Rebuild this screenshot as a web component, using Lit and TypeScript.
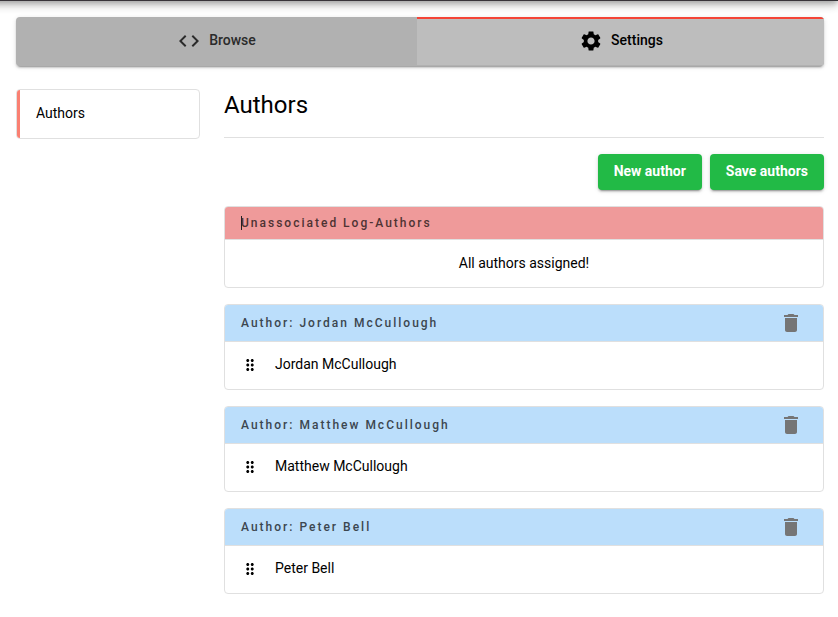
import { LitElement, html, css, svg } from "lit";
import { customElement, property } from "lit/decorators.js";

const icons: Record<string, ReturnType<typeof svg>> = {
  code: svg`<path d="M9.4 16.6L4.8 12l4.6-4.6L8 6l-6 6 6 6 1.4-1.4zm5.2 0l4.6-4.6-4.6-4.6L16 6l6 6-6 6-1.4-1.4z"/>`,
  settings: svg`<path d="M19.14 12.94c.04-.3.06-.61.06-.94 0-.32-.02-.64-.07-.94l2.03-1.58c.18-.14.23-.41.12-.61l-1.92-3.32c-.12-.22-.37-.29-.59-.22l-2.39.96c-.5-.38-1.03-.7-1.62-.94l-.36-2.54c-.04-.24-.24-.41-.48-.41h-3.84c-.24 0-.43.17-.47.41l-.36 2.54c-.59.24-1.13.57-1.62.94l-2.39-.96c-.22-.08-.47 0-.59.22L2.74 8.87c-.12.21-.08.47.12.61l2.03 1.58c-.05.3-.09.63-.09.94s.02.64.07.94l-2.03 1.58c-.18.14-.23.41-.12.61l1.92 3.32c.12.22.37.29.59.22l2.39-.96c.5.38 1.03.7 1.62.94l.36 2.54c.05.24.24.41.48.41h3.84c.24 0 .44-.17.47-.41l.36-2.54c.59-.24 1.13-.56 1.62-.94l2.39.96c.22.08.47 0 .59-.22l1.92-3.32c.12-.22.07-.47-.12-.61l-2.01-1.58zM12 15.6c-1.98 0-3.6-1.62-3.6-3.6s1.62-3.6 3.6-3.6 3.6 1.62 3.6 3.6-1.62 3.6-3.6 3.6z"/>`,
  trash: svg`<path d="M6 19c0 1.1.9 2 2 2h8c1.1 0 2-.9 2-2V7H6v12zM19 4h-3.500l-1-1h-5l-1 1H5v2h14V4z"/>`,
  drag: svg`<path d="M11 18c0 1.100-.9 2-2 2s-2-.9-2-2 .9-2 2-2 2 .9 2 2zm-2-8c-1.100 0-2 .9-2 2s.9 2 2 2 2-.9 2-2-.9-2-2-2zm0-6c-1.100 0-2 .9-2 2s.9 2 2 2 2-.9 2-2-.9-2-2-2zm6 4c1.100 0 2-.9 2-2s-.9-2-2-2-2 .9-2 2 .9 2 2 2zm0 2c-1.100 0-2 .9-2 2s.9 2 2 2 2-.9 2-2-.9-2-2-2zm0 6c-1.100 0-2 .9-2 2s.9 2 2 2 2-.9 2-2-.9-2-2-2z"/>`,
};

@customElement("ui-icon")
class UiIcon extends LitElement {
  @property() name = "code";
  @property({ type: Number }) size = 24;
  static styles = css`
    :host { display: block; flex: none; }
    svg { display: block; fill: currentColor; }
  `;
  render() {
    return html`<svg width=${this.size} height=${this.size} viewBox="0 0 24 24">${icons[this.name]}</svg>`;
  }
}

@customElement("author-card")
class AuthorCard extends LitElement {
  @property() name = "";
  static styles = css`
    :host { display: block; }
    .card { box-sizing: border-box; height: 86px; border: 1px solid #e0e0e0; border-radius: 4px; overflow: hidden; background: #fff; }
    .head { height: 36px; display: flex; align-items: center; justify-content: space-between; padding: 0 20px 0 16px; background: #bbdefb; border-bottom: 1px solid #e0e0e0; color: #3b464f; font-size: 12px; font-weight: 500; letter-spacing: 2px; line-height: 16px; }
    .trash { color: #757575; }
    .row { box-sizing: border-box; height: 47px; display: flex; align-items: center; padding: 0 0 1px 16px; gap: 16px; color: #000; line-height: 20px; }
    .label { padding-bottom: 2px; }
  `;
  render() {
    return html`<div class="card">
      <div class="head"><span>Author: ${this.name}</span><ui-icon class="trash" name="trash"></ui-icon></div>
      <div class="row"><ui-icon name="drag" size="18"></ui-icon><span class="label">${this.name}</span></div>
    </div>`;
  }
}

@customElement("app-root")
class AppRoot extends LitElement {
  static styles = css`
    :host { display: flow-root; height: 617px; overflow: hidden; background: #fff; color: #000; font: 14px/20px Roboto, sans-serif; }
    .topbar { height: 64px; margin: -63px 0 0 -20px; background: #38343a; box-shadow: 0 3px 5px -1px rgba(0,0,0,.2), 0 5px 8px rgba(0,0,0,.14), 0 1px 12px rgba(0,0,0,.12); }
    .tabs { height: 49px; margin: 16px 14px 0 16px; display: flex; border-radius: 4px; overflow: hidden; background: #b1b1b1; }
    .tabs { box-shadow: 0 3px 1px -2px rgba(0,0,0,.2), 0 2px 2px rgba(0,0,0,.14), 0 1px 5px rgba(0,0,0,.12); }
    .tab { box-sizing: border-box; height: 48px; display: flex; align-items: center; justify-content: center; gap: 8px; font-weight: 500; }
    .browse { width: 401px; color: #2b2b2b; }
    .active { flex: 1; border-top: 2px solid #f44336; background: #bdbdbd; padding: 0 0 2px 1px; }
    .tab span { padding-bottom: 2px; }
    .page { display: flex; gap: 24px; margin: 23px 14px 0 16px; }
    .side { box-sizing: border-box; width: 184px; height: 50px; border: 1px solid #e0e0e0; border-radius: 4px; overflow: hidden; }
    .link { box-sizing: border-box; height: 48px; border-left: 3px solid #fa8072; padding: 13px 16px; }
    .main { flex: 1; }
    .title { margin: 0; height: 49px; box-sizing: border-box; border-bottom: 1px solid #e0e0e0; font-size: 24px; font-weight: 400; line-height: 32px; }
    .actions { display: flex; justify-content: flex-end; gap: 8px; margin: 16px 0; }
    .btn { height: 36px; padding: 0 16px 2px; box-sizing: border-box; border: 0; border-radius: 4px; background: #22ba46; color: #fff; font: 700 14px/32px Roboto, sans-serif; box-shadow: 0 3px 1px -2px rgba(0,0,0,.2), 0 2px 2px rgba(0,0,0,.14), 0 1px 5px rgba(0,0,0,.12); }
    .cards { display: grid; gap: 16px; }
    .open { box-sizing: border-box; height: 82px; border: 1px solid #e0e0e0; border-radius: 4px; overflow: hidden; }
    .open-head { position: relative; height: 32px; padding-left: 16px; background: #ef9a9a; border-bottom: 1px solid #e0e0e0; color: #4e3333; font-size: 12px; font-weight: 500; letter-spacing: 2px; line-height: 32px; }
    .caret { position: absolute; left: 16px; top: 9px; width: 1px; height: 14px; background: #222; }
    .empty { text-align: center; line-height: 46px; }
  `;
  render() {
    return html`
      <div class="topbar"></div>
      <nav class="tabs">
        <div class="tab browse"><ui-icon name="code"></ui-icon><span>Browse</span></div>
        <div class="tab active"><ui-icon name="settings"></ui-icon><span>Settings</span></div>
      </nav>
      <div class="page">
        <aside class="side"><div class="link">Authors</div></aside>
        <main class="main">
          <h1 class="title">Authors</h1>
          <div class="actions"><button class="btn">New author</button><button class="btn">Save authors</button></div>
          <div class="cards">
            <section class="open">
              <div class="open-head"><i class="caret"></i>Unassociated Log-Authors</div>
              <div class="empty">All authors assigned!</div>
            </section>
            ${["Jordan McCullough", "Matthew McCullough", "Peter Bell"].map((n) => html`<author-card name=${n}></author-card>`)}
          </div>
        </main>
      </div>`;
  }
}
